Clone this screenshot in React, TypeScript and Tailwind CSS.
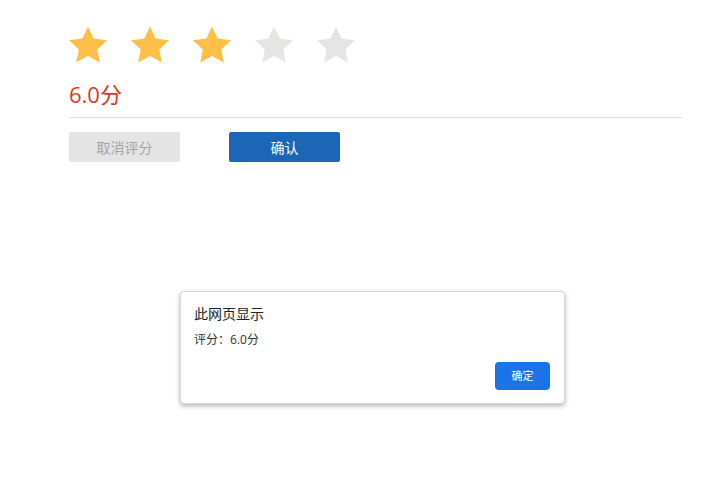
import React from 'react';

const font = { fontFamily: '"Open Sans", "Noto Sans CJK SC", sans-serif' };

const Star = ({ on }: { on: boolean }) => (
  <svg viewBox="1.7 1.5 20.6 19.6" className="w-[38px] h-[37px]">
    <path
      d="M12 1.5l3.1 6.6 7.2.9-5.3 5 1.4 7.1L12 17.6l-6.4 3.5L7 14l-5.3-5 7.2-.9z"
      fill={on ? '#fdbf47' : '#e6e5e3'}
    />
  </svg>
);

export default function App() {
  const score = 3;
  return (
    <div className="relative w-[710px] h-[501px] bg-white overflow-hidden" style={font}>
      <div className="pt-[26px] pl-[69px] w-[682px]">
        <div className="flex gap-[24px]">
          {[0, 1, 2, 3, 4].map((i) => (
            <Star key={i} on={i < score} />
          ))}
        </div>
        <p className="mt-[16px] text-[22px] leading-[30px] text-[#d63b1b]">6.0分</p>
        <div className="mt-[8px] border-t border-[#dcdcdc]" />
        <div className="mt-[14px] flex gap-[49px]">
          <button className="w-[111px] h-[30px] rounded-[2px] bg-[#e4e4e4] text-[#a3a3a3] text-[14px]">取消评分</button>
          <button className="w-[111px] h-[30px] rounded-[2px] bg-[#1c67b5] text-white text-[14px]">确认</button>
        </div>
      </div>

      <div className="absolute left-[180px] top-[291px] w-[385px] h-[113px] bg-white rounded-[4px] border border-[#d6d6d6] shadow-[0_2px_5px_rgba(0,0,0,0.3)] px-[13px] pt-[13px]">
        <p className="text-[14px] leading-[18px] text-[#222]">此网页显示</p>
        <p className="mt-[9px] text-[12px] leading-[16px] text-[#333]">评分：6.0分</p>
        <div className="mt-[14px] flex justify-end">
          <button className="w-[55px] h-[28px] rounded-[4px] bg-[#1a73e8] text-white text-[11px] mr-[1px]">确定</button>
        </div>
      </div>
    </div>
  );
}
